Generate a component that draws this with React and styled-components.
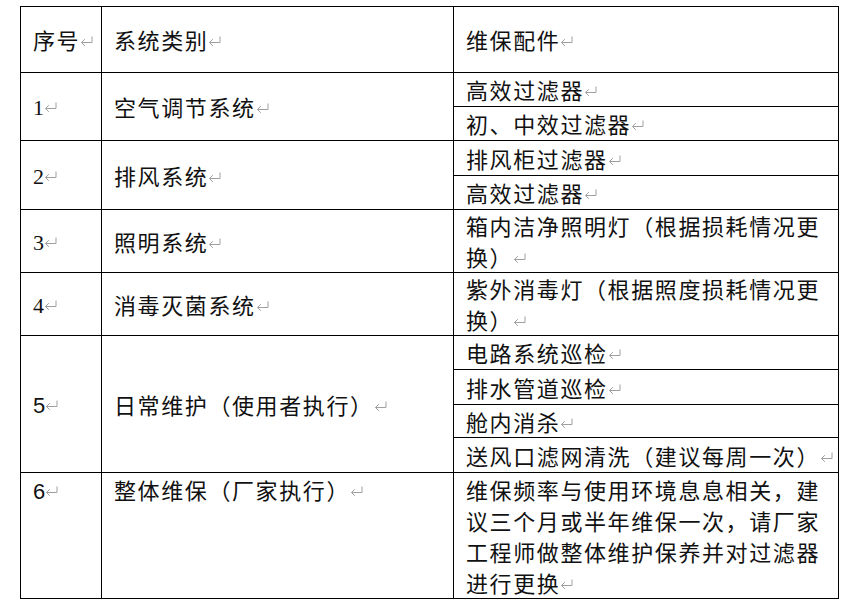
import React from 'react';
import styled, {createGlobalStyle} from 'styled-components';

const GlobalStyle = createGlobalStyle`
  body {
    margin: 0;
    background: #fff;
  }
`

const rows = [
    {no: '1', sys: '空气调节系统', parts: ['高效过滤器', '初、中效过滤器'], heights: [34, 34]},
    {no: '2', sys: '排风系统', parts: ['排风柜过滤器', '高效过滤器'], heights: [35, 34]},
    {no: '3', sys: '照明系统', parts: ['箱内洁净照明灯（根据损耗情况更换）'], heights: [63]},
    {no: '4', sys: '消毒灭菌系统', parts: ['紫外消毒灯（根据照度损耗情况更换）'], heights: [63]},
    {
        no: '5', sys: '日常维护（使用者执行）', sans: true,
        parts: ['电路系统巡检', '排水管道巡检', '舱内消杀', '送风口滤网清洗（建议每周一次）'],
        heights: [34, 35, 33, 35]
    },
    {
        no: '6', sys: '整体维保（厂家执行）', sans: true, top: true,
        parts: ['维保频率与使用环境息息相关，建议三个月或半年维保一次，请厂家工程师做整体维护保养并对过滤器进行更换'],
        heights: [126]
    },
]

// word-style paragraph mark
const Mark = () => (
    <MarkIcon width="13" height="10" viewBox="0 0 13 10">
        <path d="M12 0.5V6.5H1.5M4.8 3.2L1.5 6.5L4.8 9.8" fill="none" stroke="#a0a0a0" strokeWidth="1"/>
    </MarkIcon>
)

const App = () => {
    return (
        <>
            <GlobalStyle/>
            <Table>
                <colgroup>
                    <col style={{width: 81}}/>
                    <col style={{width: 352}}/>
                    <col style={{width: 385}}/>
                </colgroup>
                <tbody>
                <Row h={66}>
                    <Cell>序号<Mark/></Cell>
                    <Cell>系统类别<Mark/></Cell>
                    <Cell>维保配件<Mark/></Cell>
                </Row>
                {rows.map(r =>
                    r.parts.map((p, i) =>
                        <Row key={r.no + i} h={r.heights[i]}>
                            {i === 0 && <>
                                <Cell rowSpan={r.parts.length} top={r.top}>
                                    <Num sans={r.sans}>{r.no}</Num><Mark/>
                                </Cell>
                                <Cell rowSpan={r.parts.length} top={r.top}>{r.sys}<Mark/></Cell>
                            </>}
                            <Cell top={r.top} nowrap={r.parts.length > 1}>{p}<Mark/></Cell>
                        </Row>
                    )
                )}
                </tbody>
            </Table>
        </>
    )
}

const Table = styled.table`
  border-collapse: collapse;
  table-layout: fixed;
  width: 819px;
  margin: 6px 0 0 20px;
  font-family: "Noto Sans CJK SC", sans-serif;
  font-size: 22px;
  letter-spacing: 1.6px;
  color: #111;
`

const Row = styled.tr`
  height: ${p => p.h}px;
`

const Cell = styled.td`
  border: 1px solid #000;
  padding: ${p => p.top ? '1px' : '0'} 0 0 12px;
  vertical-align: ${p => p.top ? 'top' : 'middle'};
  line-height: 31px;
  white-space: ${p => p.nowrap ? 'nowrap' : 'normal'};
  overflow: visible;
`

const Num = styled.span`
  font-family: ${p => p.sans ? '"Liberation Sans"' : '"Liberation Serif"'}, serif;
  letter-spacing: 0;
`

const MarkIcon = styled.svg`
  display: inline-block;
  vertical-align: 3px;
`

export default App
